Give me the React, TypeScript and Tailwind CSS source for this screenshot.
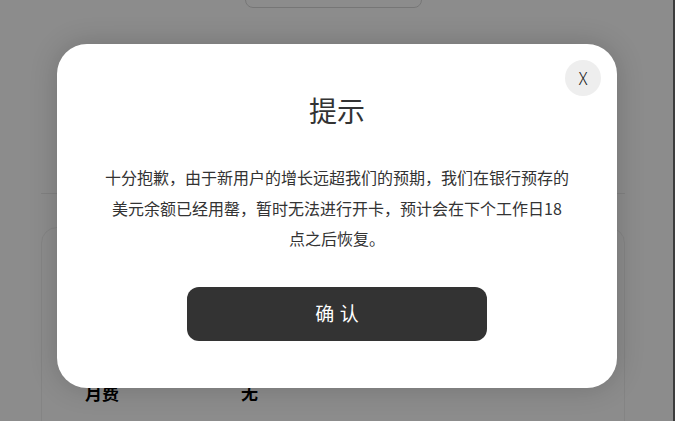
import React from "react";

const FONT = { fontFamily: '"Noto Sans CJK SC", "Noto Sans", sans-serif' };

export default function App() {
  return (
    <div className="relative w-[675px] h-[421px] overflow-hidden bg-white" style={FONT}>
      {/* PAGE (behind the dialog) */}
      <div className="flex flex-col pl-[41px] pr-[50px]">
        <div className="ml-[204px] -mt-[33px] w-[177px] h-[41px] rounded-lg border border-[#d8d8d8]" />
        <div className="mt-[185px] border-t border-[#ececec]" />
        <div className="mt-[33px] h-[300px] rounded-t-2xl border border-[#f0f0f0] px-[43px] pt-[152px]">
          <div className="flex items-center text-[17px] leading-[25px] font-bold text-black">
            <span className="w-[156px]">月费</span>
            <span>无</span>
          </div>
        </div>
      </div>

      {/* OVERLAY */}
      <div className="absolute inset-0 flex items-start justify-center bg-black/45 pt-[44px] pr-px">
        <div className="relative w-[560px] h-[344px] rounded-[30px] bg-white shadow-[0_0_28px_rgba(0,0,0,0.18)] flex flex-col items-center pt-[46px]">
          <button className="absolute top-4 right-4 w-9 h-9 rounded-full bg-[#eeeeee] flex items-center justify-center text-[17px] font-light text-[#222]">
            X
          </button>

          <h2 className="text-[28px] leading-[40px] text-[#333] font-normal">提示</h2>

          <p className="mt-[32px] w-[465px] text-center text-[16px] leading-[30.5px] text-[#333]">
            十分抱歉，由于新用户的增长远超我们的预期，我们在银行预存的美元余额已经用罄，暂时无法进行开卡，预计会在下个工作日18点之后恢复。
          </p>

          <button className="mt-[33px] w-[300px] h-[54px] rounded-xl bg-[#333333] text-white text-[19px] tracking-[0.3em] pl-[0.3em]">
            确认
          </button>
        </div>
      </div>

      {/* scrollbar edge */}
      <div className="absolute top-0 bottom-0 right-0 w-[2px] bg-[#3c3c3c]" />
    </div>
  );
}
